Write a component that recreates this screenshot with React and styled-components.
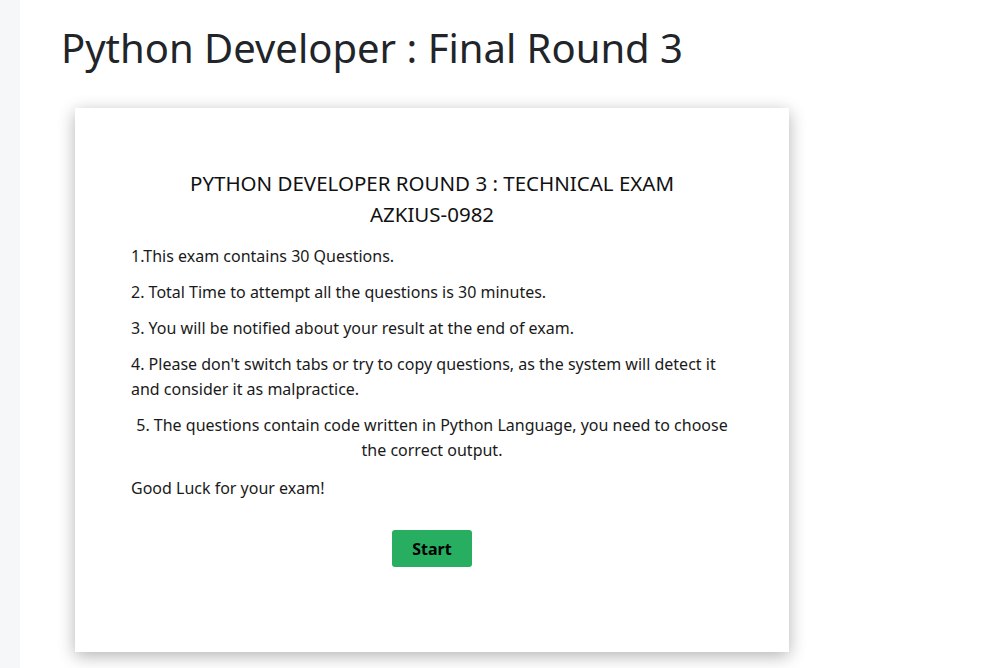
import React from "react";
import styled, { createGlobalStyle } from "styled-components";

const Global = createGlobalStyle`
  html, body { margin: 0; padding: 0; background: #ffffff; }
  body { font-family: "Noto Sans", "Open Sans", sans-serif; color: #212529; }
  * { box-sizing: border-box; }
`;

const Page = styled.div`
  display: flex;
  min-height: 668px;
`;

const SideStrip = styled.aside`
  width: 20px;
  flex: 0 0 20px;
  background: #f6f7f9;
`;

const Main = styled.main`
  flex: 1;
  padding: 22px 0 0 41px;
`;

const Title = styled.h1`
  margin: 0;
  font-size: 40px;
  font-weight: 400;
  line-height: 52px;
  color: #212529;
`;

const Card = styled.section`
  margin: 34px 0 0 14px;
  width: 714px;
  height: 544px;
  background: #fff;
  box-shadow: 0 4px 16px rgba(0, 0, 0, 0.3);
  padding: 60px 56px 0;
  display: flex;
  flex-direction: column;
`;

const Heading = styled.h2`
  margin: 0 0 14px;
  font-size: 20.5px;
  font-weight: 400;
  line-height: 31px;
  text-align: center;
  color: #111;
`;

const Rule = styled.p`
  margin: 0 0 ${(p) => (p.$center ? "13px" : "11px")};
  font-size: 16px;
  line-height: 25px;
  color: #1a1a1a;
  text-align: ${(p) => (p.$center ? "center" : "left")};
`;

const ButtonRow = styled.div`
  display: flex;
  justify-content: center;
  margin-top: 18px;
`;

const StartButton = styled.button`
  width: 80px;
  height: 37px;
  border: none;
  border-radius: 3px;
  background: #27ae60;
  color: #000;
  font-family: inherit;
  font-size: 16px;
  font-weight: 700;
  cursor: pointer;
`;

export default function App() {
  return (
    <>
      <Global />
      <Page>
        <SideStrip />
        <Main>
          <Title>Python Developer : Final Round 3</Title>
          <Card>
            <Heading>
              PYTHON DEVELOPER ROUND 3 : TECHNICAL EXAM
              <br />
              AZKIUS-0982
            </Heading>
            <Rule>1.This exam contains 30 Questions.</Rule>
            <Rule>2. Total Time to attempt all the questions is 30 minutes.</Rule>
            <Rule>3. You will be notified about your result at the end of exam.</Rule>
            <Rule>
              4. Please don't switch tabs or try to copy questions, as the system will detect it and consider it as malpractice.
            </Rule>
            <Rule $center>
              5. The questions contain code written in Python Language, you need to choose the correct output.
            </Rule>
            <Rule>Good Luck for your exam!</Rule>
            <ButtonRow>
              <StartButton>Start</StartButton>
            </ButtonRow>
          </Card>
        </Main>
      </Page>
    </>
  );
}
